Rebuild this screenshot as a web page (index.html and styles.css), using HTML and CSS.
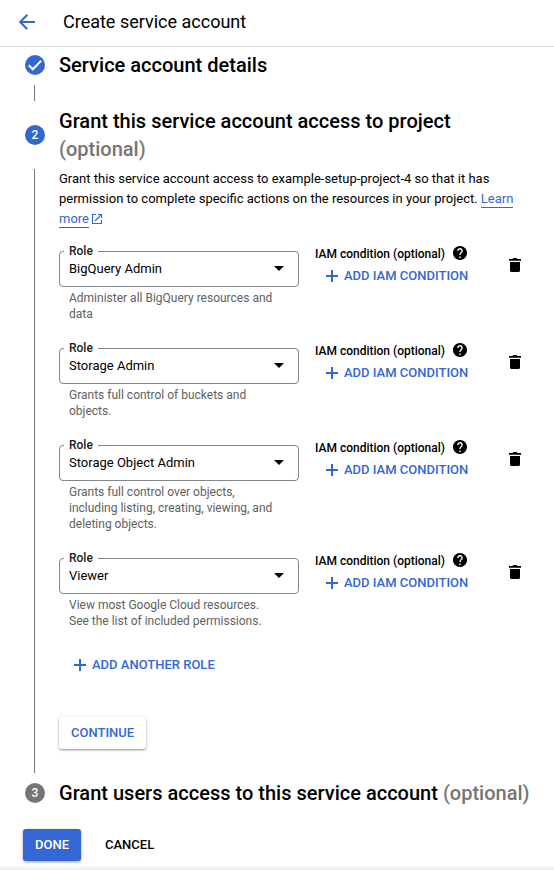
FILE: index.html
```html
<!DOCTYPE html>
<html lang="en">
<head>
<meta charset="utf-8">
<title>Create service account</title>
<link rel="stylesheet" href="styles.css">
</head>
<body>
<svg class="defs" width="0" height="0" aria-hidden="true">
  <symbol id="plus" viewBox="0 0 12 12"><path d="M6 0v12M0 6h12" fill="none" stroke="currentColor" stroke-width="2"/></symbol>
  <symbol id="help" viewBox="2 2 20 20"><path fill="currentColor" d="M12 2C6.48 2 2 6.48 2 12s4.48 10 10 10 10-4.48 10-10S17.52 2 12 2zm1 17h-2v-2h2v2zm2.07-7.75l-.9.92C13.45 12.9 13 13.5 13 15h-2v-.5c0-1.1.45-2.1 1.17-2.83l1.24-1.26c.37-.36.59-.86.59-1.41 0-1.1-.9-2-2-2s-2 .9-2 2H8c0-2.21 1.79-4 4-4s4 1.79 4 4c0 .88-.36 1.68-.93 2.25z"/></symbol>
  <symbol id="trash" viewBox="0 0 12 14"><path fill="currentColor" d="M0 1h3.5l.8-1h3.4l.8 1H12v1.7H0zM1 4h10v8.4Q11 14 9.400 14H2.600Q1 14 1 12.400z"/></symbol>
</svg>
<header class="header">
  <svg class="back" viewBox="0 0 16 16"><path d="M16 8H1.500M8.300 .8L1.200 8l7.100 7.200" fill="none" stroke="currentColor" stroke-width="2"/></svg>
  <h1>Create service account</h1>
</header>
<main>
  <section class="step">
    <div class="rail rail-done">
      <span class="marker"><svg viewBox="0 0 20 20"><path d="M3.800 10.300l4 4 8.400-8.600" fill="none" stroke="currentColor" stroke-width="2"/></svg></span>
      <span class="line"></span>
    </div>
    <h2>Service account details</h2>
  </section>
  <section class="step">
    <div class="rail rail-active"><span class="marker">2</span><span class="line"></span></div>
    <div class="content">
      <h2>Grant this service account access to project <span class="opt">(optional)</span></h2>
      <p class="intro">Grant this service account access to example-setup-project-4 so that it has permission to complete specific actions on the resources in your project. <a>Learn</a> <span class="nowrap"><a>more</a><svg class="ext" viewBox="0 0 10 10"><path d="M4 .5H.5v9h9V6M6 .5h3.500V4M9.500 .5L3 7" fill="none" stroke="currentColor" stroke-width="1.150"/></svg></span></p>
      <div class="role">
        <div class="field"><div class="select"><span class="label">Role</span>BigQuery Admin<i class="caret"></i></div><p class="hint">Administer all BigQuery resources and data</p></div>
        <div class="condition"><div class="cond-label">IAM condition (optional)<svg class="help"><use href="#help"/></svg></div><div class="add"><svg><use href="#plus"/></svg>ADD IAM CONDITION</div></div>
        <svg class="trash"><use href="#trash"/></svg>
      </div>
      <div class="role">
        <div class="field"><div class="select"><span class="label">Role</span>Storage Admin<i class="caret"></i></div><p class="hint">Grants full control of buckets and objects.</p></div>
        <div class="condition"><div class="cond-label">IAM condition (optional)<svg class="help"><use href="#help"/></svg></div><div class="add"><svg><use href="#plus"/></svg>ADD IAM CONDITION</div></div>
        <svg class="trash"><use href="#trash"/></svg>
      </div>
      <div class="role">
        <div class="field"><div class="select"><span class="label">Role</span>Storage Object Admin<i class="caret"></i></div><p class="hint">Grants full control over objects, including listing, creating, viewing, and deleting objects.</p></div>
        <div class="condition"><div class="cond-label">IAM condition (optional)<svg class="help"><use href="#help"/></svg></div><div class="add"><svg><use href="#plus"/></svg>ADD IAM CONDITION</div></div>
        <svg class="trash"><use href="#trash"/></svg>
      </div>
      <div class="role">
        <div class="field"><div class="select"><span class="label">Role</span>Viewer<i class="caret"></i></div><p class="hint">View most Google Cloud resources. See the list of included permissions.</p></div>
        <div class="condition"><div class="cond-label">IAM condition (optional)<svg class="help"><use href="#help"/></svg></div><div class="add"><svg><use href="#plus"/></svg>ADD IAM CONDITION</div></div>
        <svg class="trash"><use href="#trash"/></svg>
      </div>
      <div class="add add-role"><svg><use href="#plus"/></svg>ADD ANOTHER ROLE</div>
      <button class="btn raised">CONTINUE</button>
    </div>
  </section>
  <section class="step">
    <div class="rail rail-pending"><span class="marker">3</span></div>
    <h2>Grant users access to this service account <span class="opt">(optional)</span></h2>
  </section>
  <div class="actions"><button class="btn primary">DONE</button><button class="btn flat">CANCEL</button></div>
</main>
<div class="bottom-fade"></div>
</body>
</html>
```
FILE: styles.css
```css
* { box-sizing: border-box; }
body {
  margin: 0;
  height: 870px;
  overflow: hidden;
  display: flex;
  flex-direction: column;
  background: #fff;
  color: #000;
  font: 13px/20px Roboto, sans-serif;
}
h1, h2, p { margin: 0; }
svg { display: block; flex: none; }
.defs { position: absolute; }
.header {
  height: 47px;
  flex: none;
  display: flex;
  align-items: center;
  padding: 0 0 3px 19px;
  border-bottom: 1px solid #dadce0;
}
.back { width: 16px; height: 16px; color: #3367d6; }
h1 { margin-left: 28px; font-size: 18px; font-weight: 400; line-height: 24px; color: #000; }
main { padding: 4px 0 0 25px; }
.step { display: grid; grid-template-columns: 20px 1fr; column-gap: 14px; margin-bottom: 28px; }
.step h2 { max-width: 475px; font-size: 20px; font-weight: 500; line-height: 28px; letter-spacing: .01px; }
.opt { color: #757575; }
.rail { display: flex; flex-direction: column; align-items: center; padding-top: 4px; }
.rail-done { margin-bottom: -22px; }
.rail-active { padding-top: 18px; }
.marker {
  flex: none;
  width: 20px;
  height: 20px;
  border-radius: 50%;
  background: #3367d6;
  color: #fff;
  font-size: 12px;
  font-weight: 500;
  line-height: 20px;
  text-align: center;
}
.rail-pending .marker { background: #757575; }
.line { width: 1px; margin: 10px 1px 0 0; background: #757575; flex: none; height: 16px; }
.rail-active .line { flex: 1; margin-top: 24px; margin-bottom: -22px; }
.content h2 { width: 420px; }
.intro { margin-top: 6px; width: 470px; color: #000; }
.intro a { color: #3367d6; border-bottom: 1px solid #3367d6; padding-bottom: 1px; }
.nowrap { white-space: nowrap; }
.ext { display: inline-block; width: 10px; height: 10px; margin-left: 3px; vertical-align: -1px; color: #3367d6; }
.role { display: flex; align-items: flex-start; margin-top: 26px; }
.intro + .role { margin-top: 22px; }
.field { width: 240px; }
.select {
  position: relative;
  display: flex;
  align-items: center;
  justify-content: space-between;
  height: 36px;
  padding: 0 14px 1px 9px;
  border: 1px solid #80868b;
  border-radius: 4px;
}
.label {
  position: absolute;
  top: -9px;
  left: 4px;
  padding: 0 5px;
  background: #fff;
  color: #212121;
  font-size: 12px;
  font-weight: 500;
  line-height: 16px;
}
.caret { border: 5px solid transparent; border-top-color: #000; border-bottom: 0; }
.hint { padding: 3px 0 0 10px; width: 220px; font-size: 12px; line-height: 16px; color: #616161; }
.condition { margin-left: 16px; width: 194px; margin-top: -7px; }
.cond-label { display: flex; align-items: center; height: 20px; font-size: 12px; font-weight: 500; color: #000; }
.help { width: 14px; height: 14px; margin: -2px 0 0 8px; color: #000; }
.add { display: flex; align-items: center; height: 20px; margin: 2px 0 0 11px; font-weight: 500; color: #3367d6; }
.add svg { width: 12px; height: 12px; margin-right: 6px; }
.trash { width: 12px; height: 14px; margin-top: 7px; }
.add-role { margin: 26px 0 0 15px; }
.btn {
  display: block;
  height: 32px;
  padding: 0 12px;
  border: 0;
  border-radius: 3px;
  background: #fff;
  font: 500 13px/32px Roboto, sans-serif;
}
.raised { margin-top: 42px; margin-bottom: 2px; color: #3367d6; box-shadow: 0 1px 2px rgba(0,0,0,.36), 0 1px 4px rgba(0,0,0,.12); }
.actions { display: flex; gap: 12px; margin: -6px 0 0 -2px; }
.primary { color: #fff; background: #3367d6; box-shadow: 0 1px 3px rgba(0,0,0,.4); }
.flat { color: #000; }
.bottom-fade { height: 5px; flex: none; margin-top: auto; background: linear-gradient(#fff, #ececec); }
```
